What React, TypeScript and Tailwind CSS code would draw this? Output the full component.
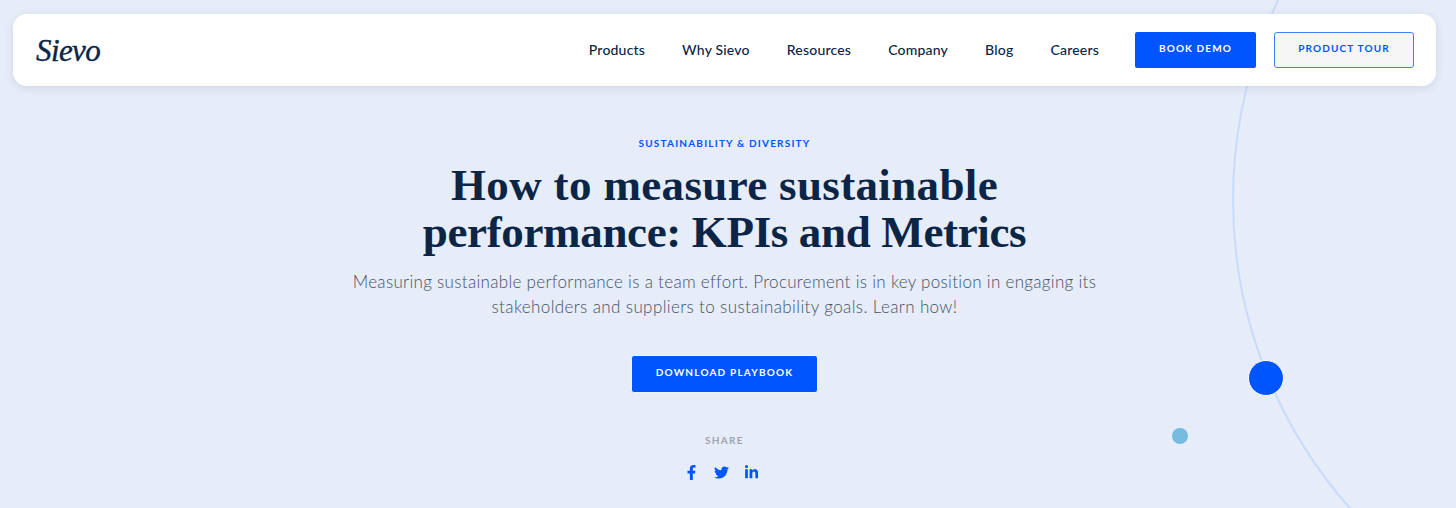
import React from "react";
import { FaFacebookF, FaTwitter, FaLinkedinIn } from "react-icons/fa";

const navItems = ["Products", "Why Sievo", "Resources", "Company", "Blog", "Careers"];

export default function App() {
  return (
    <div className="relative h-[508px] w-[1456px] overflow-hidden bg-[#e6ecf8] font-['Lato',sans-serif]">
      <div className="absolute left-[1232px] top-[-265px] h-[930px] w-[930px] rounded-full border-2 border-[#c9dbfc]" />
      <div className="absolute left-[1248px] top-[360px] h-[36px] w-[36px] rounded-full border border-white bg-[#0055ff]" />
      <div className="absolute left-[1171px] top-[427px] h-[18px] w-[18px] rounded-full border border-[#e8f0fa] bg-[#74bbdf]" />

      <div className="relative pl-[13px] pr-[20px] pt-[14px]">
        <nav className="flex h-[72px] items-center justify-between rounded-[14px] bg-white pl-[23px] pr-[22px] shadow-[0_2px_10px_rgba(10,37,70,0.1)]">
          <span className="font-['Liberation_Serif',serif] text-[31px] italic leading-none tracking-[-0.6px] text-[#0a2546] [-webkit-text-stroke:0.4px_#0a2546]">Sievo</span>
          <div className="flex items-center">
            <ul className="flex items-center gap-[37px] pb-[2px] text-[14px] font-medium tracking-[0.2px] text-[#0a2546]">
              {navItems.map((item) => (
                <li key={item}>{item}</li>
              ))}
            </ul>
            <button className="ml-[36px] h-[36px] w-[121px] rounded-[2px] bg-[#0055ff] pb-[3px] text-[10px] font-bold tracking-[1.1px] text-white">BOOK DEMO</button>
            <button className="ml-[18px] h-[36px] w-[140px] rounded-[3px] border border-[#3f80ff] bg-[#f6f6f7] pb-[3px] text-[10px] font-bold tracking-[1.15px] text-[#0055ff]">PRODUCT TOUR</button>
          </div>
        </nav>

        <main className="flex flex-col items-center pt-[50px] text-center">
          <p className="text-[10px] font-bold leading-[14px] tracking-[1.2px] text-[#0055ff]">SUSTAINABILITY &amp; DIVERSITY</p>
          <h1 className="mt-[12px] font-['Liberation_Serif',serif] text-[45px] font-bold leading-[47px] tracking-[0.35px] text-[#0a2546]">
            How to measure sustainable
            <br />
            <span className="tracking-[-0.35px]">performance: KPIs and Metrics</span>
          </h1>
          <p className="mt-[13px] text-[17px] font-light leading-[25px] tracking-[0.31px] text-[#445268]">
            Measuring sustainable performance is a team effort. Procurement is in key position in engaging its
            <br />
            <span className="tracking-[0.38px]">stakeholders and suppliers to sustainability goals. Learn how!</span>
          </p>
          <button className="mt-[36px] h-[38px] w-[187px] rounded-[3px] border border-[#f0f4fc] bg-[#0055ff] pb-[3px] text-[10px] font-bold tracking-[1.2px] text-white">DOWNLOAD PLAYBOOK</button>
          <p className="mt-[40px] text-[10px] font-bold leading-[14px] tracking-[1.3px] text-[#9aa5b5]">SHARE</p>
          <div className="mt-[18px] flex items-center gap-[15px] pr-[6px] text-[15px] text-[#0055ff]">
            <FaFacebookF />
            <FaTwitter />
            <FaLinkedinIn />
          </div>
        </main>
      </div>
    </div>
  );
}
